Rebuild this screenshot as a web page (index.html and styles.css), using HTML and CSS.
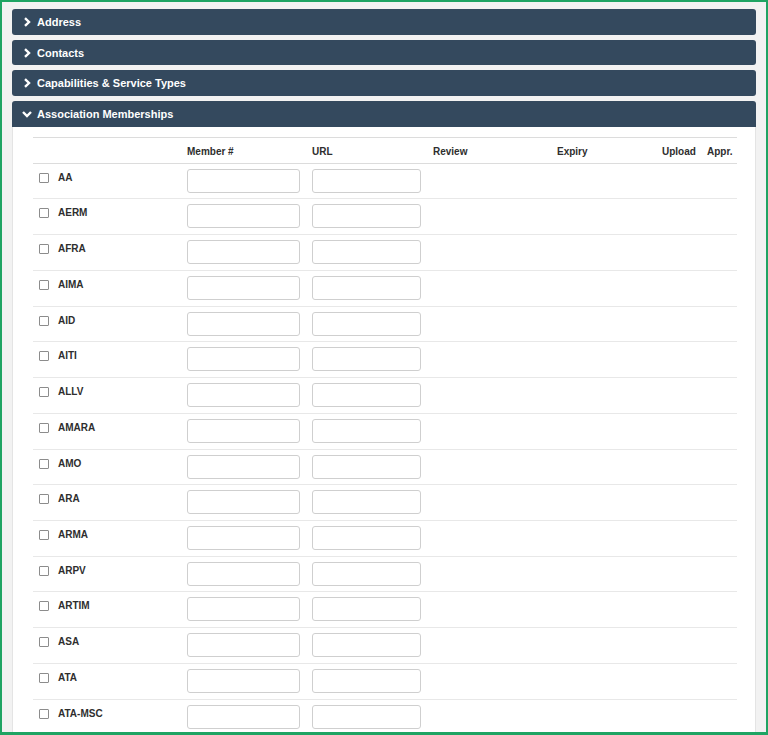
FILE: index.html
```html
<!DOCTYPE html>
<html lang="en">
<head>
    <meta charset="UTF-8">
    <meta name="viewport" content="width=device-width, initial-scale=1.0">
    <title>Supplier Profile</title>
    <link rel="stylesheet" href="styles.css">
</head>
<body>
    <div class="frame">
        <div class="panel">
            <div class="panel-heading">
                <svg class="chev" viewBox="0 0 10 10"><polyline points="3,1.2 7,5 3,8.8"/></svg>
                Address
            </div>
        </div>
        <div class="panel">
            <div class="panel-heading">
                <svg class="chev" viewBox="0 0 10 10"><polyline points="3,1.2 7,5 3,8.8"/></svg>
                Contacts
            </div>
        </div>
        <div class="panel">
            <div class="panel-heading">
                <svg class="chev" viewBox="0 0 10 10"><polyline points="3,1.2 7,5 3,8.8"/></svg>
                Capabilities &amp; Service Types
            </div>
        </div>
        <div class="panel open">
            <div class="panel-heading">
                <svg class="chev" viewBox="0 0 10 10"><polyline points="1,3 5,7 9,3"/></svg>
                Association Memberships
            </div>
            <div class="panel-body">
                <table class="memberships">
                    <colgroup>
                        <col style="width:148px">
                        <col style="width:125px">
                        <col style="width:121px">
                        <col style="width:124px">
                        <col style="width:105px">
                        <col style="width:45px">
                        <col style="width:36px">
                    </colgroup>
                    <thead>
                        <tr>
                            <th></th>
                            <th>Member #</th>
                            <th>URL</th>
                            <th>Review</th>
                            <th>Expiry</th>
                            <th>Upload</th>
                            <th>Appr.</th>
                        </tr>
                    </thead>
                    <tbody id="rows"></tbody>
                </table>
            </div>
        </div>
    </div>

    <script>
        const associations = ['AA', 'AERM', 'AFRA', 'AIMA', 'AID', 'AITI', 'ALLV', 'AMARA',
            'AMO', 'ARA', 'ARMA', 'ARPV', 'ARTIM', 'ASA', 'ATA', 'ATA-MSC'];

        const tbody = document.getElementById('rows');
        associations.forEach(name => {
            const row = tbody.insertRow();
            row.innerHTML = `
                <td class="name-cell"><label><input type="checkbox"> ${name}</label></td>
                <td><input type="text" class="field"></td>
                <td><input type="text" class="field url"></td>
                <td></td>
                <td></td>
                <td></td>
                <td></td>
            `;
        });
    </script>
</body>
</html>
```

FILE: styles.css
```css
* {
    margin: 0;
    padding: 0;
    box-sizing: border-box;
    font-family: "Liberation Sans", Arial, sans-serif;
}

body {
    background-color: #fff;
}

.frame {
    height: 735px;
    overflow: hidden;
    background-color: #f2f2f2;
    border: 2px solid #1fa463;
    border-bottom-width: 3px;
    padding: 7px 10px 0 10px;
}

.panel {
    margin-bottom: 5px;
}

.panel-heading {
    display: flex;
    align-items: center;
    height: 25.7px;
    padding-left: 10px;
    background-color: #34495e;
    color: #fff;
    font-size: 11px;
    font-weight: bold;
    border-radius: 3px;
}

.panel.open .panel-heading {
    border-radius: 3px 3px 0 0;
}

.chev {
    width: 10px;
    height: 10px;
    margin-right: 5px;
    fill: none;
    stroke: #fff;
    stroke-width: 2.4;
}

.panel-body {
    background-color: #fff;
    border: 1px solid #e4e4e4;
    border-top: none;
    padding: 10px 18px 0 20px;
}

.memberships {
    width: 704px;
    table-layout: fixed;
    border-collapse: collapse;
    color: #2e2e2e;
    font-size: 10px;
}

.memberships th {
    height: 26px;
    padding: 0 6px 6px;
    text-align: left;
    vertical-align: bottom;
    font-weight: bold;
    border-top: 1px solid #dcdcdc;
    border-bottom: 1px solid #dcdcdc;
}

.memberships td {
    padding: 5px 6px 5.73px;
    vertical-align: top;
    border-top: 1px solid #e8e8e8;
}

.name-cell label {
    display: flex;
    align-items: center;
    gap: 9px;
    padding-top: 3px;
    font-weight: bold;
    line-height: 12px;
}

.name-cell input[type="checkbox"] {
    appearance: none;
    width: 10px;
    height: 10px;
    border: 1px solid #8c8c8c;
    border-radius: 1px;
    background-color: #fff;
}

.field {
    display: block;
    width: 113px;
    height: 24px;
    border: 1px solid #cfcfcf;
    border-radius: 3px;
    background-color: #fff;
}

.field.url {
    width: 109px;
}
```
